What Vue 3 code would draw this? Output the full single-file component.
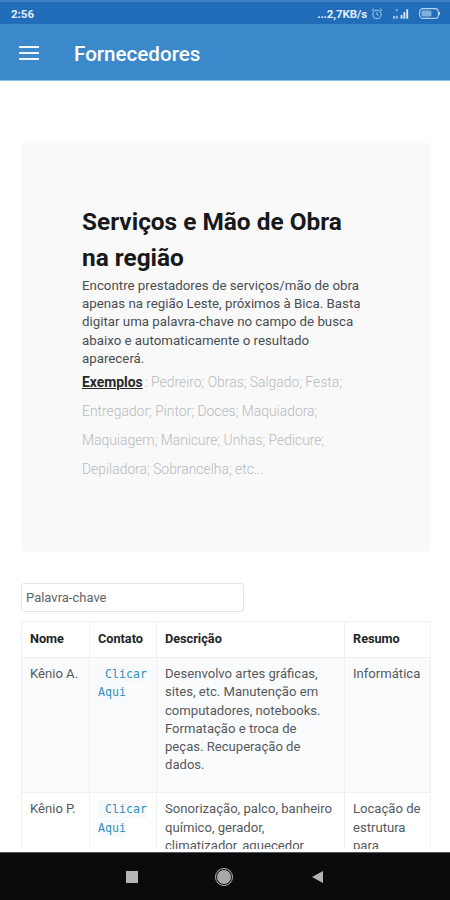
<template>
  <div class="phone">
    <div class="status-bar">
      <span class="time">2:56</span>
      <div class="status-right">
        <span class="speed">...2,7KB/s</span>
        <svg class="alarm" width="12" height="12" viewBox="0 0 13 13" fill="none" stroke="#9fc4e8" stroke-width="1.2">
          <circle cx="6.5" cy="7" r="4.5" />
          <path d="M6.5 4.5V7L8 8M1 3l2-2M12 3l-2-2" />
        </svg>
        <svg class="signal" width="18" height="12" viewBox="0 0 19 12" fill="#dbe8f5">
          <rect x="0" y="8" width="2" height="3" opacity="0.7" />
          <rect x="3" y="1" width="2" height="2" opacity="0.6" />
          <rect x="3" y="8" width="2" height="3" opacity="0.7" />
          <rect x="8" y="7" width="2" height="4" />
          <rect x="11" y="4" width="2" height="7" />
          <rect x="14" y="1" width="2" height="10" />
        </svg>
        <svg class="battery" width="21" height="11" viewBox="0 0 21 11" fill="none">
          <rect x="0.6" y="0.6" width="18.8" height="9.8" rx="3.5" stroke="#b9d3ec" stroke-width="1.1" />
          <rect x="2.5" y="2.5" width="10" height="6" rx="1.5" fill="#7fb0de" />
          <rect x="20" y="4" width="1" height="3" fill="#b9d3ec" />
        </svg>
      </div>
    </div>

    <header class="app-bar">
      <div class="menu-icon">
        <span></span>
        <span></span>
        <span></span>
      </div>
      <h1>Fornecedores</h1>
    </header>

    <main class="content">
      <section class="jumbotron">
        <h2>Serviços e Mão de Obra na região</h2>
        <p class="lead">
          Encontre prestadores de serviços/mão de obra apenas na região Leste, próximos à Bica. Basta digitar uma
          palavra-chave no campo de busca abaixo e automaticamente o resultado aparecerá.
        </p>
        <p class="examples">
          <strong>Exemplos</strong>: Pedreiro; Obras; Salgado; Festa; Entregador; Pintor; Doces; Maquiadora; Maquiagem;
          Manicure; Unhas; Pedicure; Depiladora; Sobrancelha; etc...
        </p>
      </section>

      <input class="search" type="text" placeholder="Palavra-chave" />

      <table class="table">
        <thead>
          <tr>
            <th class="col-name">Nome</th>
            <th class="col-contact">Contato</th>
            <th class="col-desc">Descrição</th>
            <th class="col-summary">Resumo</th>
          </tr>
        </thead>
        <tbody>
          <tr v-for="row in rows" :key="row.name">
            <td>{{ row.name }}</td>
            <td><code>&nbsp;Clicar Aqui</code></td>
            <td>{{ row.description }}</td>
            <td>{{ row.summary }}</td>
          </tr>
        </tbody>
      </table>
    </main>

    <nav class="nav-bar">
      <span class="nav-square"></span>
      <span class="nav-circle"></span>
      <span class="nav-back"></span>
    </nav>
  </div>
</template>

<script setup>
const rows = [
  {
    name: "Kênio A.",
    description:
      "Desenvolvo artes gráficas, sites, etc. Manutenção em computadores, notebooks. Formatação e troca de peças. Recuperação de dados.",
    summary: "Informática",
  },
  {
    name: "Kênio P.",
    description: "Sonorização, palco, banheiro químico, gerador, climatizador, aquecedor, tendas e mesas.",
    summary: "Locação de estrutura para eventos",
  },
];
</script>

<style scoped>
.phone {
  width: 450px;
  height: 900px;
  display: flex;
  flex-direction: column;
  overflow: hidden;
  background: #fff;
  font-family: Roboto, "Liberation Sans", sans-serif;
  color: #3a3d40;
}
.status-bar {
  height: 24px;
  flex: none;
  display: flex;
  align-items: center;
  justify-content: space-between;
  padding: 1px 10px 0 11px;
  box-sizing: border-box;
  background: #216db9;
  border-top: 2px solid #3f7fc4;
  color: #e3edf7;
  font-size: 11.5px;
  font-weight: 700;
}
.status-right {
  display: flex;
  align-items: center;
}
.speed {
  font-size: 11.5px;
  letter-spacing: -0.1px;
}
.alarm {
  margin-left: 4px;
}
.signal {
  margin-left: 10px;
}
.battery {
  margin-left: 8px;
}
.app-bar {
  height: 57px;
  flex: none;
  display: flex;
  align-items: center;
  box-sizing: border-box;
  background: #3b89cb;
  border-bottom: 1px solid #8cc4ee;
  padding: 2px 0 0 19px;
  color: #fff;
}
.menu-icon {
  width: 20px;
  display: flex;
  flex-direction: column;
  gap: 4px;
}
.menu-icon span {
  height: 2px;
  background: #f2f7fc;
}
.app-bar h1 {
  margin: 1px 0 0 35px;
  font-size: 20.6px;
  font-weight: 500;
}
.content {
  flex: 1;
  min-height: 0;
  overflow: hidden;
  padding: 62px 19px 0 21px;
}
.jumbotron {
  box-sizing: border-box;
  height: 409px;
  padding: 61px 70px 0 61px;
  background: #f9f9fa;
  border-radius: 5px;
}
.jumbotron h2 {
  margin: 0;
  font-size: 24.4px;
  font-weight: 700;
  line-height: 36px;
  color: #17191b;
}
.lead {
  margin: 1px 0 0;
  font-size: 13.3px;
  line-height: 18.2px;
  color: #4a4e52;
}
.examples {
  margin: 0;
  font-size: 13.9px;
  line-height: 29px;
  font-weight: 300;
  color: #b8babc;
}
.examples strong {
  margin-right: 2px;
  font-weight: 700;
  color: #26292b;
  text-decoration: underline;
}
.search {
  display: block;
  box-sizing: border-box;
  width: 223px;
  height: 29px;
  margin-top: 31px;
  padding: 0 4px;
  border: 1px solid #e3e5e7;
  border-radius: 3px;
  background: #fff;
  font-family: inherit;
  font-size: 13px;
  outline: none;
}
.search::placeholder {
  color: #5f6468;
  opacity: 1;
}
.table {
  width: 410px;
  margin-top: 9px;
  border-collapse: collapse;
  table-layout: fixed;
  font-size: 13.1px;
  line-height: 18.2px;
}
.col-name {
  width: 68px;
}
.col-contact {
  width: 67px;
}
.col-desc {
  width: 188px;
}
th,
td {
  box-sizing: border-box;
  border: 1px solid #eef0f2;
  padding: 8px 8px 9px;
  text-align: left;
  vertical-align: top;
}
th {
  font-size: 12.7px;
  font-weight: 700;
  color: #212528;
}
tbody tr:nth-child(odd) {
  background: #fafbfc;
}
td {
  color: #55595d;
}
tbody td {
  padding-top: 7px;
  padding-bottom: 18px;
}
code {
  padding: 2px 0;
  background: #f8f9fa;
  font-family: "DejaVu Sans Mono", "Liberation Mono", monospace;
  font-size: 11.6px;
  color: #2f8fc4;
}
.nav-bar {
  position: relative;
  height: 48px;
  flex: none;
  display: flex;
  align-items: center;
  box-sizing: border-box;
  padding: 1px 0 0 126px;
  background: #0a0b0c;
  border-top: 1px solid #55585a;
  box-shadow: 0 -3px 0 #fff;
}
.nav-square {
  width: 12px;
  height: 12px;
  background: #b5b5b5;
}
.nav-circle {
  width: 14px;
  height: 14px;
  margin-left: 78px;
  border-radius: 50%;
  background: #a8a8a8;
  border: 1px solid #0a0b0c;
  outline: 1px solid #b5b5b5;
  outline-offset: 0;
}
.nav-back {
  width: 0;
  height: 0;
  margin-left: 80px;
  border-style: solid;
  border-width: 6px 11px 6px 0;
  border-color: transparent #b5b5b5 transparent transparent;
}
</style>

<style>
body {
  margin: 0;
  background: #fff;
}
</style>
